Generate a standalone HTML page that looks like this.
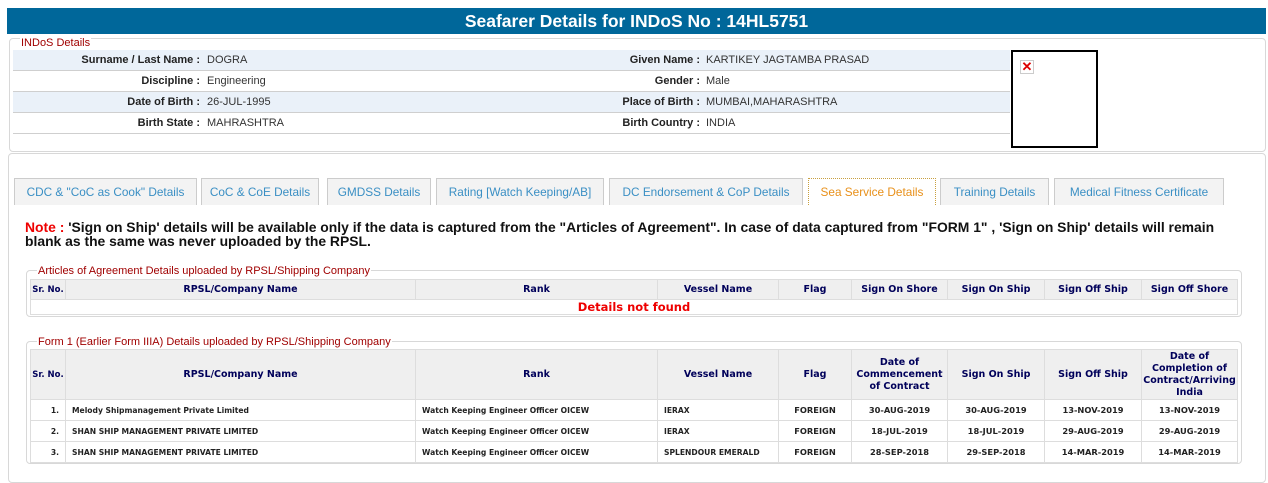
<!DOCTYPE html>
<html><head><meta charset="utf-8"><style>
*{box-sizing:border-box;margin:0;padding:0}
body{width:1268px;height:477px;background:#fff;font-family:"Liberation Sans",Arial,sans-serif;position:relative;overflow:hidden}
.a{position:absolute}
.hdr{left:7px;top:8px;width:1259px;height:26px;background:#00679a;color:#fff;font-weight:bold;font-size:17.5px;text-align:center;line-height:26px}
.fs{border:1px solid #d8d8d8;border-radius:4px}
.lg{background:#fff;color:#a00000;font-size:11px;padding:0 1px;line-height:12px}
.row{left:13px;width:997px;height:21px;border-bottom:1px solid #cfcfcf;font-size:11px;color:#333;line-height:20px}
.row.l{background:#eaf1f9}
.row span{position:absolute}
.lb{font-weight:bold;text-align:right;color:#222}
.tab{top:178px;height:27px;border:1px solid #ccc;border-bottom:none;background:#f3f3f3;color:#3a8fc4;font-size:11.8px;text-align:center;line-height:27px}
.note{left:25px;top:220px;width:1195px;font-size:13.9px;font-weight:bold;line-height:14px;color:#111}
table{border-collapse:collapse;table-layout:fixed;position:absolute;left:30px;width:1207px;font-family:"DejaVu Sans",Verdana,sans-serif}
th{background:#efefef;color:#00005a;font-size:9.5px;font-weight:bold;border:1px solid #ddd;text-align:center;line-height:12px;padding:0}
td{font-size:7.6px;font-weight:bold;color:#222;border:1px solid #ddd;height:21px;padding:0 6px}
td.c{text-align:center;font-size:8.3px}
</style></head><body>
<div class="a hdr">Seafarer Details for INDoS No : 14HL5751</div>
<div class="a fs" style="left:9px;top:38px;width:1257px;height:114px"></div>
<div class="a lg" style="left:20px;top:37px">INDoS Details</div>
<div class="a row l" style="top:50px"><span class="lb" style="right:810px">Surname / Last Name :</span><span style="left:194px">DOGRA</span><span class="lb" style="right:310px">Given Name :</span><span style="left:693px">KARTIKEY JAGTAMBA PRASAD</span></div>
<div class="a row" style="top:71px"><span class="lb" style="right:810px">Discipline :</span><span style="left:194px">Engineering</span><span class="lb" style="right:310px">Gender :</span><span style="left:693px">Male</span></div>
<div class="a row l" style="top:92px"><span class="lb" style="right:810px">Date of Birth :</span><span style="left:194px">26-JUL-1995</span><span class="lb" style="right:310px">Place of Birth :</span><span style="left:693px">MUMBAI,MAHARASHTRA</span></div>
<div class="a row" style="top:113px"><span class="lb" style="right:810px">Birth State :</span><span style="left:194px">MAHRASHTRA</span><span class="lb" style="right:310px">Birth Country :</span><span style="left:693px">INDIA</span></div>
<div class="a" style="left:1011px;top:50px;width:87px;height:98px;border:2px solid #000;background:#fff"></div>
<div class="a" style="left:1020px;top:60px;width:14px;height:14px;border:1px solid #ccc;color:#d00;font-size:13px;font-weight:bold;line-height:12px;text-align:center">✕</div>

<div class="a fs" style="left:8px;top:153px;width:1258px;height:330px"></div>
<div class="a tab" style="left:14px;width:183px">CDC &amp; "CoC as Cook" Details</div>
<div class="a tab" style="left:201px;width:118px">CoC &amp; CoE Details</div>
<div class="a tab" style="left:327px;width:104px">GMDSS Details</div>
<div class="a tab" style="left:436px;width:168px">Rating [Watch Keeping/AB]</div>
<div class="a tab" style="left:609px;width:194px">DC Endorsement &amp; CoP Details</div>
<div class="a tab" style="left:808px;width:128px;background:#fff;border:1px dotted #c8a040;border-bottom:none;color:#e8901a">Sea Service Details</div>
<div class="a tab" style="left:940px;width:109px">Training Details</div>
<div class="a tab" style="left:1054px;width:170px">Medical Fitness Certificate</div>
<div class="a note"><span style="color:#e00">Note :</span> 'Sign on Ship' details will be available only if the data is captured from the "Articles of Agreement". In case of data captured from "FORM 1" , 'Sign on Ship' details will remain blank as the same was never uploaded by the RPSL.</div>

<div class="a fs" style="left:26px;top:270px;width:1216px;height:47px"></div>
<div class="a lg" style="left:37px;top:265px">Articles of Agreement Details uploaded by RPSL/Shipping Company</div>
<table style="top:279px">
<colgroup><col style="width:35px"><col style="width:350px"><col style="width:242px"><col style="width:121px"><col style="width:73px"><col style="width:96px"><col style="width:97px"><col style="width:97px"><col style="width:96px"></colgroup>
<tr style="height:20px"><th style="font-size:8.5px;white-space:nowrap">Sr. No.</th><th>RPSL/Company Name</th><th>Rank</th><th>Vessel Name</th><th>Flag</th><th>Sign On Shore</th><th>Sign On Ship</th><th>Sign Off Ship</th><th>Sign Off Shore</th></tr>
<tr><td colspan="9" style="height:15px;padding:0;text-align:center;color:#e00;font-size:11.5px;font-family:'DejaVu Sans',sans-serif;line-height:13px">Details not found</td></tr>
</table>

<div class="a fs" style="left:26px;top:341px;width:1216px;height:123px"></div>
<div class="a lg" style="left:37px;top:336px">Form 1 (Earlier Form IIIA) Details uploaded by RPSL/Shipping Company</div>
<table style="top:349px">
<colgroup><col style="width:35px"><col style="width:350px"><col style="width:242px"><col style="width:121px"><col style="width:73px"><col style="width:96px"><col style="width:97px"><col style="width:97px"><col style="width:96px"></colgroup>
<tr style="height:50px"><th style="font-size:8.5px;white-space:nowrap">Sr. No.</th><th>RPSL/Company Name</th><th>Rank</th><th>Vessel Name</th><th>Flag</th><th>Date of Commencement of Contract</th><th>Sign On Ship</th><th>Sign Off Ship</th><th>Date of Completion of Contract/Arriving India</th></tr>
<tr><td style="text-align:right">1.</td><td>Melody Shipmanagement Private Limited</td><td>Watch Keeping Engineer Officer OICEW</td><td>IERAX</td><td class="c">FOREIGN</td><td class="c">30-AUG-2019</td><td class="c">30-AUG-2019</td><td class="c">13-NOV-2019</td><td class="c">13-NOV-2019</td></tr>
<tr><td style="text-align:right">2.</td><td>SHAN SHIP MANAGEMENT PRIVATE LIMITED</td><td>Watch Keeping Engineer Officer OICEW</td><td>IERAX</td><td class="c">FOREIGN</td><td class="c">18-JUL-2019</td><td class="c">18-JUL-2019</td><td class="c">29-AUG-2019</td><td class="c">29-AUG-2019</td></tr>
<tr><td style="text-align:right">3.</td><td>SHAN SHIP MANAGEMENT PRIVATE LIMITED</td><td>Watch Keeping Engineer Officer OICEW</td><td>SPLENDOUR EMERALD</td><td class="c">FOREIGN</td><td class="c">28-SEP-2018</td><td class="c">29-SEP-2018</td><td class="c">14-MAR-2019</td><td class="c">14-MAR-2019</td></tr>
</table>
</body></html>
